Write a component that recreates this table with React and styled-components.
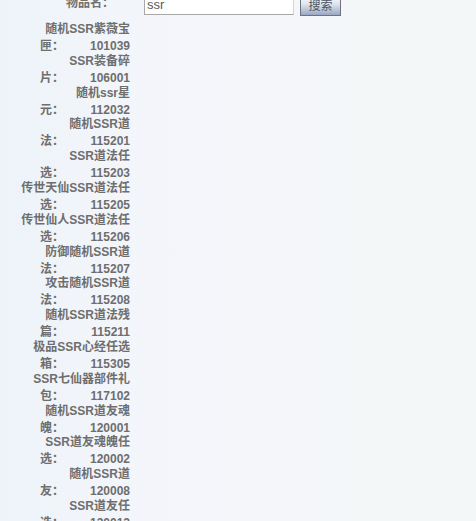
import React from 'react'
import styled, { createGlobalStyle } from 'styled-components'

const GlobalStyle = createGlobalStyle`
  html, body {
    margin: 0;
    height: 100%;
    overflow: hidden;
  }
  body {
    background: linear-gradient(to right, #edf3f9 0%, #f1f5fa 16%, #f5f6fb 45%, #f4f7f9 72%, #f3f7f7 100%);
    font-family: "Liberation Sans", "Noto Sans CJK SC", sans-serif;
  }
`

const StyledPage = styled.div`
  display: grid;
  grid-template-columns: 130px 1fr;
  column-gap: 14px;
  margin-top: -6px;
`

const StyledLabel = styled.div`
  text-align: right;
  padding-right: 16px;
  font-size: 12px;
  font-weight: bold;
  line-height: 18px;
  color: #707070;
`

const StyledSearchBar = styled.div`
  display: flex;
  align-items: flex-end;
`

const StyledInput = styled.input`
  box-sizing: border-box;
  width: 150px;
  height: 21px;
  margin: 0;
  padding: 0 2px;
  border: 1px solid #a8a8a8;
  border-right-color: #d6d6d6;
  background: white;
  font-family: "Liberation Sans", sans-serif;
  font-size: 13px;
  color: #5a5a5a;
  outline: none;
`

const StyledButton = styled.button`
  box-sizing: border-box;
  width: 41px;
  height: 22px;
  margin: 0 0 -1px 6px;
  padding: 0;
  border: 1px solid #6f747c;
  background: linear-gradient(to bottom, #fbfcfe 0%, #dfe5ef 45%, #9aa8c3 100%);
  font-family: "Noto Sans CJK SC", sans-serif;
  font-size: 12px;
  line-height: 20px;
  color: #4e5560;
`

const StyledList = styled.div`
  grid-column: 1;
  margin-top: 7px;
  font-size: 12px;
  font-weight: bold;
  color: #6e6e6e;
`

const StyledEntry = styled.div`
  display: flex;
  flex-direction: column;
  align-items: flex-end;
  height: 31.8px;
`

const StyledNameLine = styled.div`
  white-space: nowrap;
  line-height: 15px;
`

const StyledIdLine = styled.div`
  display: flex;
  justify-content: space-between;
  width: 90px;
  padding-top: 2px;
  line-height: 15px;
`

const items = [
  ['随机SSR紫薇宝', '匣', '101039'],
  ['SSR装备碎', '片', '106001'],
  ['随机ssr星', '元', '112032'],
  ['随机SSR道', '法', '115201'],
  ['SSR道法任', '选', '115203'],
  ['传世天仙SSR道法任', '选', '115205'],
  ['传世仙人SSR道法任', '选', '115206'],
  ['防御随机SSR道', '法', '115207'],
  ['攻击随机SSR道', '法', '115208'],
  ['随机SSR道法残', '篇', '115211'],
  ['极品SSR心经任选', '箱', '115305'],
  ['SSR七仙器部件礼', '包', '117102'],
  ['随机SSR道友魂', '魄', '120001'],
  ['SSR道友魂魄任', '选', '120002'],
  ['随机SSR道', '友', '120008'],
  ['SSR道友任', '选', '120012'],
]

export default function App() {
  return (
    <>
      <GlobalStyle />
      <StyledPage>
        <StyledLabel>物品名：</StyledLabel>
        <StyledSearchBar>
          <StyledInput defaultValue="ssr" />
          <StyledButton>搜索</StyledButton>
        </StyledSearchBar>
        <StyledList>
          {items.map(([name, last, id]) => (
            <StyledEntry key={id}>
              <StyledNameLine>{name}</StyledNameLine>
              <StyledIdLine>
                <span>{last}：</span>
                <span>{id}</span>
              </StyledIdLine>
            </StyledEntry>
          ))}
        </StyledList>
      </StyledPage>
    </>
  )
}
